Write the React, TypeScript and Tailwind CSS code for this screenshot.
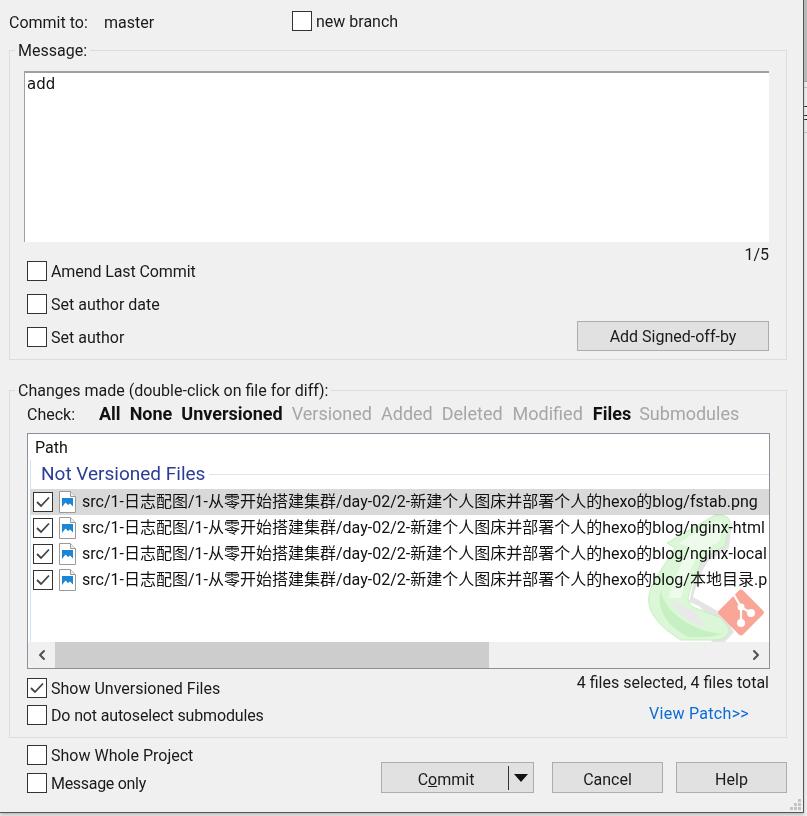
import { ChevronLeft, ChevronRight } from "lucide-react";

const FONT = "font-['Roboto','Noto_Sans_CJK_SC',sans-serif]";

// the list is cut at its right edge, so the names stop where the picture stops
const files = [
  "src/1-日志配图/1-从零开始搭建集群/day-02/2-新建个人图床并部署个人的hexo的blog/fstab.png",
  "src/1-日志配图/1-从零开始搭建集群/day-02/2-新建个人图床并部署个人的hexo的blog/nginx-html",
  "src/1-日志配图/1-从零开始搭建集群/day-02/2-新建个人图床并部署个人的hexo的blog/nginx-local",
  "src/1-日志配图/1-从零开始搭建集群/day-02/2-新建个人图床并部署个人的hexo的blog/本地目录.p",
];

// bits of the window behind, seen at the right edge
const edge = [
  { h: "h-[81px]", bg: "bg-[#b9b9b9]" },
  { h: "h-[1px]", bg: "bg-[#999999]" },
  { h: "h-[5px]", bg: "bg-[#f0f0f0]" },
  { h: "h-[1px]", bg: "bg-[#bbbbbb]" },
  { h: "h-[18px]", bg: "bg-[#f0f0f0]" },
  { h: "h-[1px]", bg: "bg-[#111111]" },
  { h: "h-[8px]", bg: "bg-[#f0f0f0]" },
  { h: "h-[1px]", bg: "bg-[#111111]" },
  { h: "h-[3px]", bg: "bg-[#f0f0f0]" },
  { h: "h-[1px]", bg: "bg-[#111111]" },
  { h: "h-[12px]", bg: "bg-[#f0f0f0]" },
  { h: "h-[1px]", bg: "bg-[#bbbbbb]" },
];

function Check({ checked = false }: { checked?: boolean }) {
  return (
    <span className="w-5 h-5 shrink-0 border border-[#333333] bg-white flex items-center justify-center">
      {checked && (
        <svg width="14" height="12" viewBox="0 0 14 12" fill="none">
          <path d="M1 6 L5 10 L13 1.5" stroke="#444444" strokeWidth="1.8" />
        </svg>
      )}
    </span>
  );
}

function CheckRow({ label, checked, labelClass = "" }: { label: string; checked?: boolean; labelClass?: string }) {
  return (
    <div className="flex items-center gap-[4px] h-5 text-[#1a1a1a]">
      <Check checked={checked} />
      <span className={`pt-[2px] ${labelClass}`}>{label}</span>
    </div>
  );
}

function PngIcon() {
  return (
    <svg width="17" height="22" viewBox="0 0 17 22" className="shrink-0">
      <path d="M0.5 0.5 H11.5 L16.5 5.5 V21.5 H0.5 Z" fill="#ffffff" stroke="#9a9a9a" />
      <path d="M11.5 0.5 V5.5 H16.5" fill="#eeeeee" stroke="#9a9a9a" />
      <rect x="3" y="7" width="11" height="11" fill="#1b86d6" />
      <path d="M3 16 L6.5 11.5 L9 14 L11 12.5 L14 15.5 V18 H3 Z" fill="#ffffff" />
    </svg>
  );
}

function Watermark() {
  return (
    <svg width="130" height="133" viewBox="640 510 130 133" className="absolute right-0 top-[76px] z-20 mix-blend-multiply">
      {/* shadow in the crook of the arrow */}
      <path d="M733 522 L730 548 L709 561 C702 572 697 586 694 597 L724 614 L735 632 L726 642 L712 642 L722 630 L700 606 L690 602 L700 560 L724 544 Z" fill="#e4e4e4" />
      {/* green arrow, pointing up */}
      <path
        d="M668 543 L716 515 Q730 514 731 522 L726 546 L705 558 C698 570 692 584 689 598 Q689 605 696 608 L720 617 Q731 626 730 632 Q726 640 716 640 L682 640 C668 632 652 618 650 604 C648 590 656 580 662 570 L676 548 Z"
        fill="#dcf7d8"
        stroke="#c4efbe"
        strokeWidth="1"
      />
      <path d="M680 543 L714 522 Q724 520 724 526 L720 542 L700 554 C692 566 686 582 682 598 L670 598 C674 578 684 560 692 548 Z" fill="#eefbec" />
      <path d="M662 590 C664 610 690 630 722 634 Q712 638 690 637 C670 628 656 610 662 590 Z" fill="#c6f0c1" />
      <path d="M672 600 C676 612 688 622 708 628 L696 612 L684 606 Z" fill="#e9e9e9" />
      {/* git logo */}
      <rect x="725" y="595.5" width="34" height="34" rx="3" transform="rotate(45 742 612.5)" fill="#f9a597" />
      <path d="M735 595 L742 607 V623 M742 607 L752 613" stroke="#ffffff" strokeWidth="2.2" fill="none" />
      <circle cx="742" cy="623" r="4" fill="#ffffff" />
      <circle cx="742" cy="607" r="3.5" fill="#ffffff" />
      <circle cx="752" cy="613" r="4" fill="#ffffff" />
    </svg>
  );
}

export default function App() {
  return (
    <div className={`flex w-[807px] h-[816px] bg-[#f0f0f0] overflow-hidden ${FONT} text-[16px] leading-5`}>
      <div className="relative shrink-0 w-[804px] h-[813px] bg-[#f0f0f0] border-r border-b border-[#555555] shadow-[0_2px_3px_#bbbbbb] pl-[9px] pr-[16px]">
        {/* Commit to */}
        <div className="flex items-center h-[40px] pt-[2px] text-[#1a1a1a]">
          <span className="w-[95px] pt-[4px]">Commit to:</span>
          <span className="w-[188px] pt-[4px]">master</span>
          <CheckRow label="new branch" />
        </div>

        {/* Message */}
        <fieldset className="border border-[#dcdcdc] h-[320px] min-w-0 pl-[14px] pr-[17px]">
          <legend className="-ml-[9px] px-[3px] pt-[1px] h-5 text-[#1a1a1a]">Message:</legend>
          <div className="h-[171px] mt-[11px] bg-white border-t-2 border-l border-[#a0a0a0] px-[2px] pt-[1px] font-['DejaVu_Sans',sans-serif] text-[15px] leading-[20px] text-[#111111]">
            add
          </div>
          <div className="text-right h-5 mt-[2px] pt-[1px] text-[#1a1a1a]">1/5</div>
          <div className="flex justify-between items-end -mt-[3px]">
            <div className="flex flex-col gap-[13px] pl-[3px]">
              <CheckRow label="Amend Last Commit" labelClass="tracking-[-0.1px]" />
              <CheckRow label="Set author date" />
              <CheckRow label="Set author" />
            </div>
            <button className="w-[192px] h-[30px] -mb-[4px] pt-[1px] bg-[#e1e1e1] border border-[#adadad] text-[#1a1a1a]">Add Signed-off-by</button>
          </div>
        </fieldset>

        {/* Changes */}
        <fieldset className="border border-[#dcdcdc] h-[358px] min-w-0 mt-[20px] pl-[17px] pr-[16px]">
          <legend className="-ml-[12px] px-[3px] pt-[1px] h-5 text-[#1a1a1a]">Changes made (double-click on file for diff):</legend>
          <div className="flex items-center h-[20px] mt-[4px] gap-[9px] text-[18px] text-[#a6a6a6] whitespace-nowrap">
            <span className="w-[63px] pt-[2px] text-[16px] text-[#1a1a1a]">Check:</span>
            <span className="font-bold text-[#111111]">All</span>
            <span className="font-bold text-[#111111]">None</span>
            <span className="font-bold text-[#111111]">Unversioned</span>
            <span>Versioned</span>
            <span>Added</span>
            <span>Deleted</span>
            <span className="ml-[1px]">Modified</span>
            <span className="ml-[1px] font-bold text-[#111111]">Files</span>
            <span className="-ml-[1px]">Submodules</span>
          </div>

          <div className="relative mt-[9px] h-[236px] bg-white border border-[#8f8f9d] overflow-hidden text-[#111111]">
            <div className="h-[26px] pl-[7px] pt-[2px] flex items-center">Path</div>
            <div className="ml-[2px] border-l border-[#cfe4f7] h-[182px]">
              <div className="flex items-center h-[26px] pl-[10px] pt-[2px] text-[19px] text-[#2b3c96]">
                <span>Not Versioned Files</span>
                <span className="ml-1 flex-1 border-t border-[#dde6ee]" />
              </div>
              <div className="relative z-10 mt-[3px]">
                {files.map((f, i) => (
                  <div key={f} className={`flex items-center gap-[6px] h-[26px] -ml-[1px] pl-[3px] whitespace-nowrap ${i === 0 ? "bg-[#d9d9d9]" : ""}`}>
                    <Check checked />
                    <PngIcon />
                    <span>{f}</span>
                  </div>
                ))}
              </div>
            </div>
            <Watermark />
            {/* Horizontal scrollbar */}
            <div className="flex items-center h-[26px] bg-[#f0f0f0] relative z-10">
              <div className="w-[27px] flex justify-center">
                <ChevronLeft size={16} strokeWidth={3} color="#505050" />
              </div>
              <div className="w-[434px] h-full bg-[#cdcdcd]" />
              <div className="flex-1" />
              <div className="w-[27px] flex justify-center">
                <ChevronRight size={16} strokeWidth={3} color="#505050" />
              </div>
            </div>
          </div>

          <div className="flex justify-between mt-[9px]">
            <div className="flex flex-col gap-[7px]">
              <CheckRow label="Show Unversioned Files" checked />
              <CheckRow label="Do not autoselect submodules" labelClass="tracking-[-0.15px]" />
            </div>
            <div className="flex flex-col items-end -mt-[5px] mr-[1px]">
              <span className="text-[#1a1a1a]">4 files selected, 4 files total</span>
              <span className="mt-[11px] mr-[20px] tracking-[0.3px] text-[#0a6bd6]">View Patch&gt;&gt;</span>
            </div>
          </div>
        </fieldset>

        {/* Bottom */}
        <div className="flex justify-between items-end mt-[7px] pl-[18px]">
          <div className="flex flex-col gap-[8px]">
            <CheckRow label="Show Whole Project" />
            <CheckRow label="Message only" labelClass="tracking-[-0.3px]" />
          </div>
          <div className="flex">
            <button className="w-[153px] h-[31px] mr-[18px] bg-[#e1e1e1] border border-[#adadad] flex items-center text-[#1a1a1a]">
              <span className="flex-1 text-center pl-[2px] pt-[5px]">
                C<span className="underline">o</span>mmit
              </span>
              <span className="h-[24px] border-l border-[#333333]" />
              <span className="w-[24px] flex justify-center">
                <svg width="14" height="8" viewBox="0 0 14 8"><path d="M0 0 H14 L7 8 Z" fill="#111111" /></svg>
              </span>
            </button>
            <button className="w-[111px] h-[31px] mr-[13px] pt-[5px] bg-[#e1e1e1] border border-[#adadad] text-[#1a1a1a]">Cancel</button>
            <button className="w-[111px] h-[31px] pt-[5px] bg-[#e1e1e1] border border-[#adadad] text-[#1a1a1a]">Help</button>
          </div>
        </div>

        {/* Resize grip */}
        <svg width="12" height="12" viewBox="0 0 12 12" fill="#c4c4c4" className="absolute right-[1px] bottom-[1px]">
          <rect x="8" y="0" width="3" height="3" />
          <rect x="4" y="4" width="3" height="3" />
          <rect x="8" y="4" width="3" height="3" />
          <rect x="0" y="8" width="3" height="3" />
          <rect x="4" y="8" width="3" height="3" />
          <rect x="8" y="8" width="3" height="3" />
        </svg>
      </div>
      <div className="flex-1">
        {edge.map((s, i) => (
          <div key={i} className={`${s.h} ${s.bg}`} />
        ))}
      </div>
    </div>
  );
}
